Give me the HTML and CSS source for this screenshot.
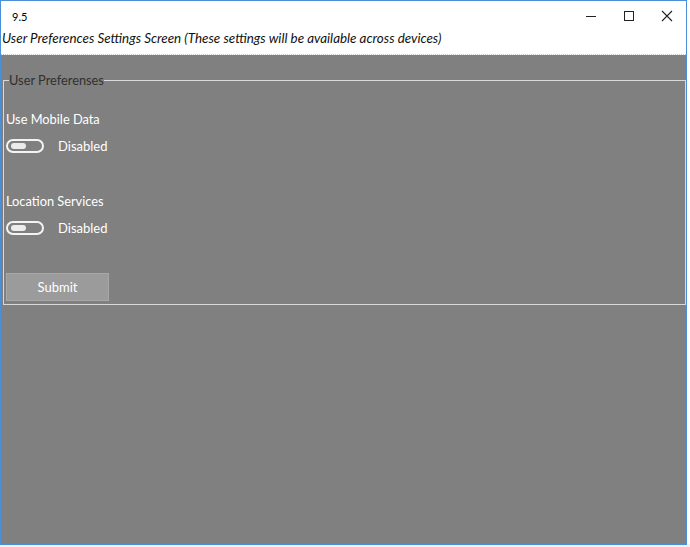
FILE: index.html
```html
<!DOCTYPE html>
<html>
<head>
<meta charset="utf-8">
<link rel="stylesheet" href="styles.css">
</head>
<body>
<div class="desk">
  <div class="window">
    <div class="titlebar">
      <span class="title">9.5</span>
      <div class="controls">
        <span class="ctl"><svg width="12" height="12" viewBox="0 0 12 12"><path d="M1 6.5h10" stroke="#222" stroke-width="1"/></svg></span>
        <span class="ctl"><svg width="12" height="12" viewBox="0 0 12 12"><rect x="1.5" y="1.5" width="9" height="9" fill="none" stroke="#222" stroke-width="1"/></svg></span>
        <span class="ctl"><svg width="12" height="12" viewBox="0 0 12 12"><path d="M1 1l10 10M11 1L1 11" stroke="#222" stroke-width="1.1"/></svg></span>
      </div>
    </div>
    <div class="header">User Preferences Settings Screen (These settings will be available across devices)</div>
    <div class="content">
      <fieldset class="group">
        <legend class="legend">User Preferenses</legend>
        <div class="setting">
          <div class="label">Use Mobile Data</div>
          <div class="toggle-row">
            <span class="toggle"><span class="knob"></span></span>
            <span class="state">Disabled</span>
          </div>
        </div>
        <div class="setting second">
          <div class="label">Location Services</div>
          <div class="toggle-row">
            <span class="toggle"><span class="knob"></span></span>
            <span class="state">Disabled</span>
          </div>
        </div>
        <button class="submit">Submit</button>
      </fieldset>
    </div>
  </div>
  <div class="side"></div>
</div>
<div class="bottom"></div>
</body>
</html>
```
FILE: styles.css
```css
html, body {
  margin: 0;
  padding: 0;
  background: #ffffff;
  font-family: "Lato", "Noto Sans", sans-serif;
}
.desk {
  display: flex;
  width: 690px;
  height: 544px;
}
.window {
  width: 685px;
  height: 543px;
  border: 1px solid #4a8fd8;
  display: flex;
  flex-direction: column;
  background: #808080;
}
.side {
  flex: 1;
  background: #ffffff;
}
.titlebar {
  height: 30px;
  background: #ffffff;
  display: flex;
  align-items: center;
  justify-content: space-between;
}
.title {
  font-size: 11px;
  color: #000;
  padding-left: 11px;
}
.controls {
  display: flex;
}
.ctl {
  width: 38px;
  height: 30px;
  display: flex;
  align-items: center;
  justify-content: center;
}
.header {
  background: #ffffff;
  height: 23px;
  font-style: italic;
  font-size: 13.4px;
  color: #111;
  padding-left: 1px;
  line-height: 15px;
  border-bottom: 1px dotted #c8c8c8;
}
.content {
  flex: 1;
  padding: 18px 0 0 2px;
}
.group {
  margin: 0;
  border: 1px solid #d8d8d8;
  padding: 0 0 3px 2px;
  height: 232px;
  box-sizing: border-box;
}
.legend {
  font-size: 12.8px;
  color: #303030;
  padding: 0;
  margin-left: 3px;
  line-height: 14px;
}
.setting {
  margin-top: 24px;
}
.setting.second {
  margin-top: 36px;
}
.label {
  color: #ffffff;
  font-size: 12.8px;
  line-height: 16px;
}
.toggle-row {
  display: flex;
  align-items: center;
  margin-top: 8px;
  height: 22px;
}
.toggle {
  width: 31px;
  height: 10px;
  border: 2px solid #f4f4f4;
  border-radius: 8px;
  display: flex;
  align-items: center;
  padding-left: 3px;
  box-sizing: content-box;
}
.knob {
  width: 15px;
  height: 6px;
  border-radius: 3px;
  background: #ececec;
}
.state {
  color: #ffffff;
  font-size: 13px;
  margin-left: 14px;
}
.submit {
  margin-top: 34px;
  width: 103px;
  height: 28px;
  background: #9b9b9b;
  border: 1px solid #a8a8a8;
  color: #ffffff;
  font-family: "Lato", "Noto Sans", sans-serif;
  font-size: 13px;
  padding: 0;
}
.bottom {
  height: 3px;
  background: #f2f2f2;
}
```
